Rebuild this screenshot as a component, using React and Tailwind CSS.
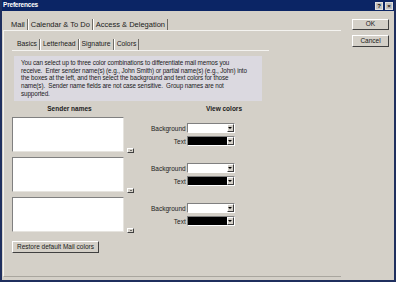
import React from 'react';

// Win2000-style "Preferences" dialog, Colors sub-tab.
const font = { fontFamily: '"Liberation Sans", Arial, sans-serif' };

const Tab = ({ label, first }) => (
  <div
    className={`h-[11px] flex items-center px-[2px] border-r border-[#6f6c66] ${
      first ? '' : 'border-l border-l-white'
    }`}
  >
    {label}
  </div>
);

const Dropdown = ({ dark }) => (
  <div className="w-[48px] h-[10px] flex border border-t-[#808080] border-l-[#808080] border-b-white border-r-white">
    <div className={`flex-1 ${dark ? 'bg-black' : 'bg-white'}`} />
    <div className="w-[7px] h-full bg-[#d4d0c8] border border-t-white border-l-white border-b-[#404040] border-r-[#404040] flex items-center justify-center">
      <div className="w-0 h-0 border-l-[2px] border-r-[2px] border-t-[2px] border-l-transparent border-r-transparent border-t-black" />
    </div>
  </div>
);

const SenderRow = () => (
  <div className="flex items-end">
    <div className="w-[112px] h-[35px] bg-white border border-t-[#808080] border-l-[#808080] border-b-[#e6e4df] border-r-[#e6e4df]" />
    <div className="ml-[3px] mb-[-1px] w-[7px] h-[5px] bg-[#d4d0c8] border border-t-white border-l-white border-b-[#404040] border-r-[#404040] flex items-center justify-center">
      <div className="w-0 h-0 border-l-[1.5px] border-r-[1.5px] border-t-[1.5px] border-l-transparent border-r-transparent border-t-black" />
    </div>
    <div className="ml-[17px] self-center flex flex-col items-end gap-[3px] text-[6.5px] leading-[9px]">
      <div className="flex items-center gap-[1px]">
        <span>Background</span>
        <Dropdown />
      </div>
      <div className="flex items-center gap-[1px]">
        <span>Text</span>
        <Dropdown dark />
      </div>
    </div>
  </div>
);

const info = [
  'You can select up to three color combinations to differentiate mail memos you',
  'receive.  Enter sender name(s) (e.g., John Smith) or partial name(s) (e.g., John) into',
  'the boxes at the left, and then select the background and text colors for those',
  'name(s).  Sender name fields are not case sensitive.  Group names are not',
  'supported.',
];

export default function App() {
  return (
    <div
      style={font}
      className="w-[396px] h-[282px] bg-[#d4d0c8] border-2 border-t-0 border-[#1f2f5e] flex flex-col text-[#202020] overflow-hidden"
    >
      {/* title bar */}
      <div className="h-[11px] bg-[#0b2565] flex items-center justify-between pl-[1px] pr-[1px]">
        <span className="text-white font-bold text-[6.5px] tracking-[-0.2px] leading-none">Preferences</span>
        <div className="flex gap-[2px]">
          <div className="w-[8px] h-[8px] bg-[#c0c0c0] border border-[#e0e0e0] text-[6px] font-bold leading-[6px] text-center text-black">?</div>
          <div className="w-[8px] h-[8px] bg-[#c0c0c0] border border-[#e0e0e0] text-[6px] font-bold leading-[6px] text-center text-black">×</div>
        </div>
      </div>

      <div className="flex flex-1">
        {/* left: tabs + panel */}
        <div className="w-[339px] flex flex-col pl-[1px] pt-[8px]">
          <div className="flex pl-[6px] text-[7.5px] leading-none">
            <Tab label="Mail" first />
            <Tab label="Calendar & To Do" />
            <Tab label="Access & Delegation" />
          </div>
          <div className="flex-1 border-t border-l border-t-[#f4f3f0] border-l-[#f4f3f0] border-b border-b-[#a9a69f] mb-[3px] pt-[8px] pl-[8px]">
            <div className="w-[257px]">
              <div className="flex text-[6.8px] leading-none pl-[3px]">
                <Tab label="Basics" first />
                <Tab label="Letterhead" />
                <Tab label="Signature" />
                <Tab label="Colors" />
              </div>
              <div className="border-t border-[#f4f3f0] pt-[5px] pl-[2px]">
                <div className="w-[248px] bg-[#dbd9e0] px-[7px] pt-[3px] pb-[3px] text-[6.3px] tracking-[-0.1px] leading-[7.7px] whitespace-pre">
                  {info.map((l) => (
                    <div key={l}>{l}</div>
                  ))}
                </div>
              </div>
            </div>

            <div className="flex text-[6.5px] font-bold leading-none mt-[5px]">
              <div className="w-[115px] text-center">Sender names</div>
              <div className="ml-[79px]">View colors</div>
            </div>

            <div className="flex flex-col gap-[5px] mt-[5px]">
              <SenderRow />
              <SenderRow />
              <SenderRow />
            </div>

            <button className="mt-[5px] h-[12px] px-[4px] bg-[#d4d0c8] border border-t-white border-l-white border-b-[#404040] border-r-[#404040] text-[6.5px] leading-none">
              Restore default Mail colors
            </button>
          </div>
        </div>

        {/* right: buttons */}
        <div className="flex flex-col gap-[5px] ml-[11px] pt-[8px]">
          <button className="w-[37px] h-[11px] bg-[#d4d0c8] border border-t-white border-l-white border-b-[#404040] border-r-[#404040] text-[6.5px] leading-none">OK</button>
          <button className="w-[37px] h-[12px] bg-[#d4d0c8] border border-t-white border-l-white border-b-[#404040] border-r-[#404040] text-[6.5px] leading-none">Cancel</button>
        </div>
      </div>
    </div>
  );
}
